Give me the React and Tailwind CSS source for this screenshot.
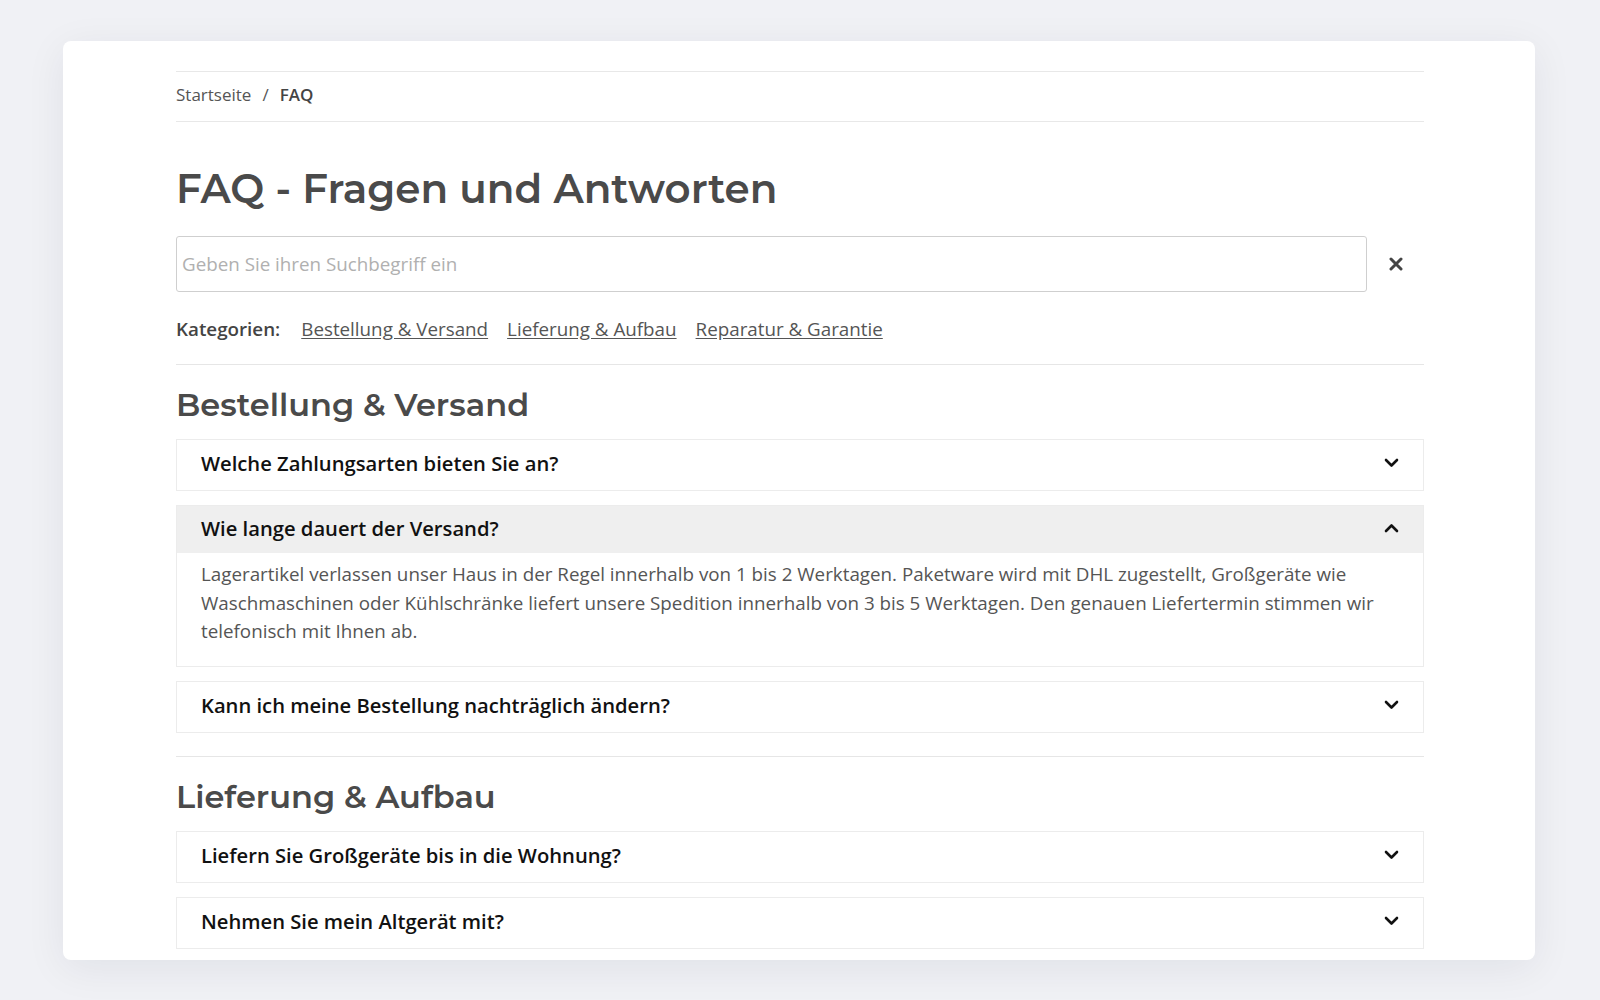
import React, { useState } from "react";

const sections = [
  {
    title: "Bestellung & Versand",
    items: [
      { q: "Welche Zahlungsarten bieten Sie an?", a: "" },
      {
        q: "Wie lange dauert der Versand?",
        a: "Lagerartikel verlassen unser Haus in der Regel innerhalb von 1 bis 2 Werktagen. Paketware wird mit DHL zugestellt, Großgeräte wie Waschmaschinen oder Kühlschränke liefert unsere Spedition innerhalb von 3 bis 5 Werktagen. Den genauen Liefertermin stimmen wir telefonisch mit Ihnen ab.",
      },
      { q: "Kann ich meine Bestellung nachträglich ändern?", a: "" },
    ],
  },
  {
    title: "Lieferung & Aufbau",
    items: [
      { q: "Liefern Sie Großgeräte bis in die Wohnung?", a: "" },
      { q: "Nehmen Sie mein Altgerät mit?", a: "" },
    ],
  },
];

const headingFont = { fontFamily: "Montserrat, Inter, 'Noto Sans', sans-serif" };

function Chevron({ up }) {
  return (
    <svg width="15" height="10" viewBox="0 0 15 10" className="shrink-0">
      <polyline
        points={up ? "2,8 7.5,2.5 13,8" : "2,2 7.5,7.5 13,2"}
        fill="none"
        stroke="#111"
        strokeWidth="2.6"
        strokeLinecap="round"
        strokeLinejoin="round"
      />
    </svg>
  );
}

function FaqItem({ item, open, onToggle }) {
  if (open) {
    return (
      <div className="border border-[#ececec]">
        <button
          onClick={onToggle}
          className="w-full h-[47px] pb-[3px] flex items-center justify-between px-[24px] bg-[#efefef] text-left"
        >
          <span className="text-[20.2px] font-semibold text-[#111]">{item.q}</span>
          <Chevron up />
        </button>
        <div className="px-[24px] pt-[7px] pb-[20px] text-[18.8px] leading-[28.6px] text-[#555]">
          {item.a}
        </div>
      </div>
    );
  }
  return (
    <div className="border border-[#ececec] pb-[4px]">
      <button
        onClick={onToggle}
        className="w-full h-[46px] flex items-center justify-between px-[24px] text-left"
      >
        <span className="text-[20.2px] font-semibold text-[#111]">{item.q}</span>
        <Chevron />
      </button>
    </div>
  );
}

export default function App() {
  const [openKey, setOpenKey] = useState("0-1");

  return (
    <div
      className="min-h-screen bg-[#f0f1f5] pl-[63px] pr-[65px] py-[41px]"
      style={{ fontFamily: "'Open Sans', 'Noto Sans', sans-serif" }}
    >
      <div className="h-[919px] overflow-hidden rounded-lg bg-white shadow-[0_8px_40px_rgba(20,25,60,0.07)] pt-[30px]">
        <div className="ml-[113px] w-[1248px]">
          {/* Breadcrumb */}
          <nav className="h-[51px] pb-[3px] border-y border-[#e8e8e8] flex items-center text-[17px] text-[#555]">
            <span>Startseite</span>
            <span className="mx-[11px]">/</span>
            <span className="font-semibold text-[#444]">FAQ</span>
          </nav>

          <h1
            className="mt-[43px] text-[40.4px] leading-[48px] font-semibold text-[#4a4a4a]"
            style={headingFont}
          >
            FAQ - Fragen und Antworten
          </h1>

          {/* Suche */}
          <div className="mt-[23px] flex items-center">
            <input
              type="text"
              placeholder="Geben Sie ihren Suchbegriff ein"
              className="flex-1 h-[56px] border border-[#cfcfcf] rounded-[3px] px-[5px] text-[18.8px] text-[#333] placeholder:text-[#b0b0b0] outline-none"
            />
            <button className="w-[57px] flex items-center justify-center text-[#444]">
              <svg width="14" height="14" viewBox="0 0 14 14">
                <path d="M2 2 L12 12 M12 2 L2 12" stroke="#444" strokeWidth="3" strokeLinecap="round" />
              </svg>
            </button>
          </div>

          {/* Kategorien */}
          <div className="mt-[23px] h-[28px] flex items-center text-[18.8px] text-[#555]">
            <span className="font-semibold text-[#444] mr-[21px]">Kategorien:</span>
            {sections.map((s) => (
              <a key={s.title} href="#" className="underline underline-offset-2 mr-[19px]">
                {s.title}
              </a>
            ))}
            <a href="#" className="underline underline-offset-2">
              Reparatur &amp; Garantie
            </a>
          </div>

          {/* Sektionen */}
          <div className="mt-[21px]">
            {sections.map((s, si) => (
              <section key={s.title} className="border-t border-[#e6e6e6] pt-[21px] pb-[7px]">
                <h2
                  className="text-[32px] leading-[38px] font-semibold text-[#4a4a4a]"
                  style={headingFont}
                >
                  {s.title}
                </h2>
                <div className="mt-[15px] flex flex-col gap-[14px] mb-[16px]">
                  {s.items.map((it, ii) => {
                    const key = `${si}-${ii}`;
                    return (
                      <FaqItem
                        key={key}
                        item={it}
                        open={openKey === key}
                        onToggle={() => setOpenKey(openKey === key ? null : key)}
                      />
                    );
                  })}
                </div>
              </section>
            ))}
          </div>
        </div>
      </div>
    </div>
  );
}
